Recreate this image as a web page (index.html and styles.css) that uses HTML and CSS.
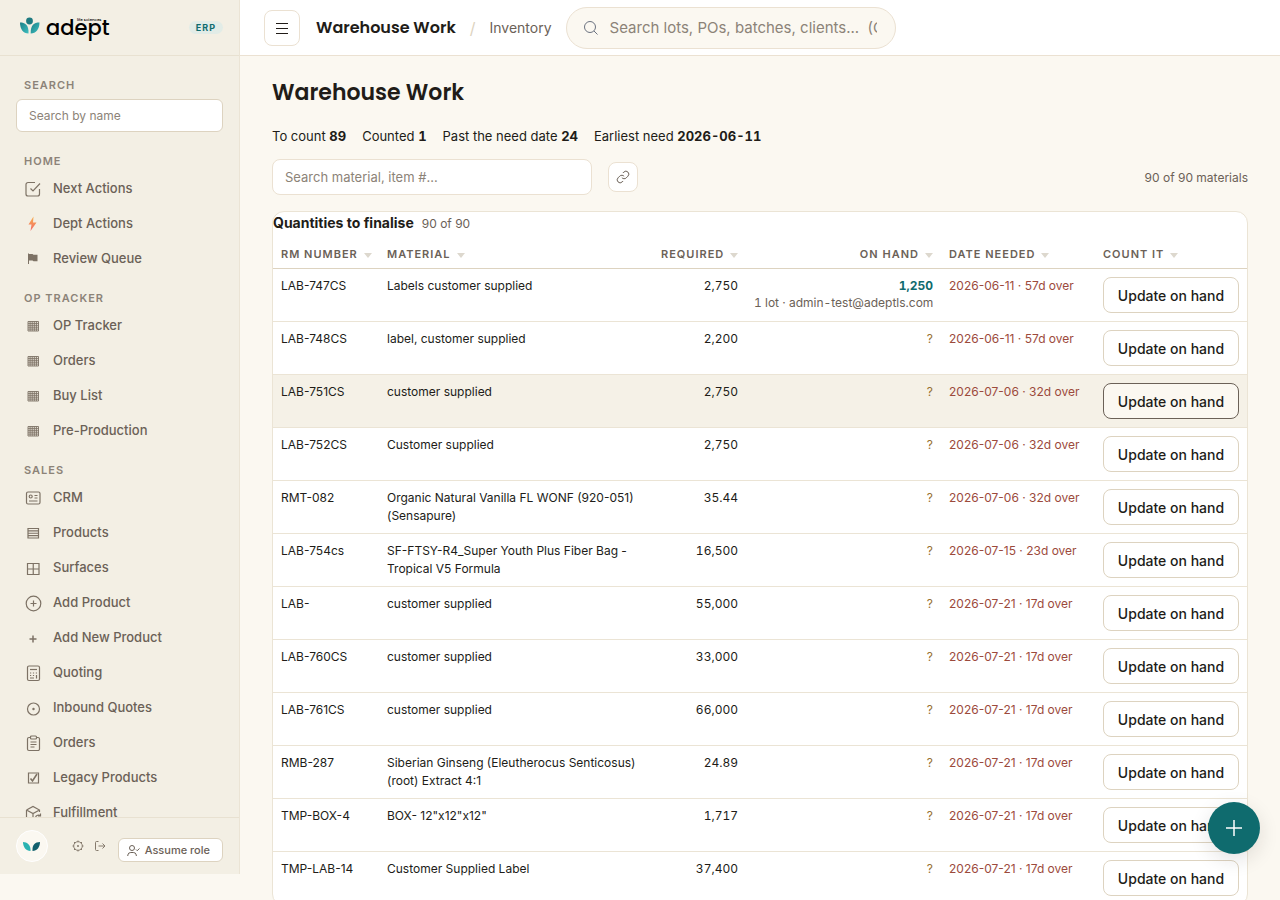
FILE: index.html
```
<!DOCTYPE html>
<html lang="en">
<head>
    <meta charset="UTF-8">
    <meta name="viewport" content="width=device-width, initial-scale=1.0">
    <title>Warehouse Work</title>
    <link rel="stylesheet" href="styles.css">
</head>
<body>
    <!-- shared icons -->
    <svg class="sprite" aria-hidden="true">
        <symbol id="i-grid" viewBox="0 0 18 18"><path d="M4 4.500h10.500v9.500H4zM6.100 4.500V14M8.200 4.500V14M10.300 4.500V14M12.400 4.500V14M4 6.400h10.500M4 8.300h10.500M4 10.200h10.500M4 12.100h10.500" stroke-width=".9"/></symbol>
    </svg>

    <div class="app">
        <aside class="sidebar">
            <div class="brand">
                <svg class="brand-mark" width="20" height="18" viewBox="0 0 20 18">
                    <defs>
                        <linearGradient id="leaf" x1="0" y1="0" x2="1" y2="1">
                            <stop offset="0" stop-color="#1b7f86"/>
                            <stop offset="1" stop-color="#3fbfc0"/>
                        </linearGradient>
                    </defs>
                    <circle cx="9.500" cy="4" r="3.400" fill="#1d7a80"/>
                    <path d="M0 5.500C5 5.500 9 8 8.500 16.500C3 16.500 0 12 0 5.500Z" fill="url(#leaf)"/>
                    <path d="M19.500 5.500C14 5.500 10.500 8 10.700 16.500C16 16.500 19.500 12 19.500 5.500Z" fill="url(#leaf)"/>
                </svg>
                <span class="brand-name">adept<small>life sciences</small></span>
                <span class="badge">ERP</span>
            </div>

            <nav class="nav">
                <div class="nav-section nav-search">
                    <label class="nav-label" for="nav-search">Search</label>
                    <input type="text" id="nav-search" placeholder="Search by name">
                </div>

                <div class="nav-section">
                    <div class="nav-label">Home</div>
                    <a class="nav-item" href="#"><svg viewBox="0 0 18 18"><path d="M11 2.500H4A2 2 0 0 0 2 4.500v9.500a2 2 0 0 0 2 2h9.500a2 2 0 0 0 2-2V9M6.500 8.500l2.500 2.500 7-7.500"/></svg>Next Actions</a>
                    <a class="nav-item" href="#"><svg viewBox="0 0 18 18"><defs><linearGradient id="bolt" x1="0" y1="0" x2="0" y2="1"><stop offset="0" stop-color="#f7b04c"/><stop offset="1" stop-color="#f2686a"/></linearGradient></defs><path d="M9.500 1.500L4.500 9.500h3L6.500 16L12.500 7.500H9z" fill="url(#bolt)" stroke="none"/></svg>Dept Actions</a>
                    <a class="nav-item" href="#"><svg viewBox="0 0 18 18"><path d="M4 3.500h1v.5h3.500l1 .7H13.500v6.500H9.500L8.500 10.500H5V14H4z" fill="currentColor" stroke="none"/></svg>Review Queue</a>
                </div>

                <div class="nav-section">
                    <div class="nav-label">OP Tracker</div>
                    <a class="nav-item" href="#"><svg><use href="#i-grid"/></svg>OP Tracker</a>
                    <a class="nav-item" href="#"><svg><use href="#i-grid"/></svg>Orders</a>
                    <a class="nav-item" href="#"><svg><use href="#i-grid"/></svg>Buy List</a>
                    <a class="nav-item" href="#"><svg><use href="#i-grid"/></svg>Pre-Production</a>
                </div>

                <div class="nav-section">
                    <div class="nav-label">Sales</div>
                    <a class="nav-item" href="#"><svg viewBox="0 0 18 18"><rect x="2.500" y="3" width="13.500" height="12" rx="1.500"/><circle cx="6.700" cy="7.500" r="1.500"/><path d="M10.500 6.500h3M10.500 9h3M5 12h8.500"/></svg>CRM</a>
                    <a class="nav-item" href="#"><svg viewBox="0 0 18 18"><path d="M4 4.500h10.500v9.500H4zM4 6.900h10.500M4 9.250h10.500M4 11.600h10.500"/></svg>Products</a>
                    <a class="nav-item" href="#"><svg viewBox="0 0 18 18"><path d="M3.500 4.500h11.500v11H3.500zM9.250 4.500v11M3.500 10h11.500"/></svg>Surfaces</a>
                    <a class="nav-item" href="#"><svg viewBox="0 0 18 18"><circle cx="9.500" cy="9.500" r="7.300"/><path d="M9.500 6.500v6M6.500 9.500h6"/></svg>Add Product</a>
                    <a class="nav-item" href="#"><svg viewBox="0 0 18 18"><path d="M9 6.500v7M5.500 10h7" stroke-width="1.500"/></svg>Add New Product</a>
                    <a class="nav-item" href="#"><svg viewBox="0 0 18 18"><rect x="3.500" y="2" width="12" height="14.500" rx="1.500"/><path d="M6 5.500h7"/><path d="M6 9h1.200M8.900 9h1.200M11.800 9H13M6 11.500h1.200M8.900 11.500h1.200M6 14h4M12.500 11V14.500"/></svg>Quoting</a>
                    <a class="nav-item" href="#"><svg viewBox="0 0 18 18"><circle cx="9.500" cy="10" r="6"/><circle cx="9.500" cy="10" r=".6" fill="currentColor"/></svg>Inbound Quotes</a>
                    <a class="nav-item" href="#"><svg viewBox="0 0 18 18"><path d="M6.500 3.500H5A1.500 1.500 0 0 0 3.500 5v10A1.500 1.500 0 0 0 5 16.500h9a1.500 1.500 0 0 0 1.500-1.500V5A1.500 1.500 0 0 0 14 3.500h-1.500"/><rect x="6.500" y="2" width="6" height="3" rx="1"/><path d="M6.500 8h6M6.500 10.500h6M6.500 13h4"/></svg>Orders</a>
                    <a class="nav-item" href="#"><svg viewBox="0 0 18 18"><path d="M4.500 4h10v10h-10z"/><path d="M6.500 9.500l2 2.500 4.500-7" stroke-width="1.600"/></svg>Legacy Products</a>
                    <a class="nav-item" href="#"><svg viewBox="0 0 18 18"><path d="M2.500 6L9 2.500 15.500 6v2M2.500 6v8L9 17V9.500M2.500 6L9 9.500 15.500 6M11.500 13.500a3 3 0 0 1 5-1.500M16.500 9.500V12H14"/></svg>Fulfillment</a>
                </div>
            </nav>

            <div class="sidebar-footer">
                <div class="avatar">
                    <svg width="18" height="11" viewBox="0 0 18 11">
                        <path d="M0 1C4 1 8 4 7.500 10C3 10 0 6 0 1Z" fill="#2ab3b1"/>
                        <path d="M17 1C12 1 9 4 9.500 10C14 10 17 6 17 1Z" fill="#12606d"/>
                    </svg>
                </div>
                <button class="icon-btn" type="button" aria-label="Settings"><svg width="12" height="12" viewBox="0 0 12 12"><circle cx="6" cy="6" r="4.300"/><circle cx="6" cy="6" r=".6" fill="currentColor"/><path d="M6 .5v1.500M6 10v1.500M.5 6H2M10 6h1.500M2 2l1 1M9 9l1 1M10 2L9 3M3 9l-1 1"/></svg></button>
                <button class="icon-btn" type="button" aria-label="Sign out"><svg width="12" height="12" viewBox="0 0 12 12"><path d="M4.500 1.500h-2a1 1 0 0 0-1 1v7a1 1 0 0 0 1 1h2M4.500 6h6M8.500 3.500L11 6 8.500 8.500"/></svg></button>
                <button class="role-btn" type="button"><svg width="13" height="13" viewBox="0 0 13 13"><circle cx="5" cy="4" r="2.500"/><path d="M.8 12V11a3 3 0 0 1 3-2.500h2.500a3 3 0 0 1 3 2.500v1M9 5.500l1.200 1.200L12.500 4.500"/></svg>Assume role</button>
            </div>
        </aside>

        <div class="main">
            <header class="topbar">
                <button class="menu-btn" type="button" aria-label="Toggle menu"><svg width="14" height="14" viewBox="0 0 14 14"><path d="M1 2.500h12M1 7.500h12M1 12.500h12"/></svg></button>
                <span class="topbar-title">Warehouse Work</span>
                <span class="slash">/</span>
                <a class="crumb" href="#">Inventory</a>
                <label class="global-search">
                    <svg width="16" height="16" viewBox="0 0 16 16"><circle cx="7" cy="7" r="5.500"/><path d="M11 11l3.500 3.500"/></svg>
                    <input type="text" aria-label="Search everything" placeholder="Search lots, POs, batches, clients...&nbsp; (Ctrl+K)">
                </label>
            </header>

            <main class="content">
                <h1>Warehouse Work</h1>

                <div class="stats">
                    <span>To count <b>89</b></span>
                    <span>Counted <b>1</b></span>
                    <span>Past the need date <b>24</b></span>
                    <span>Earliest need <b>2026-06-11</b></span>
                </div>

                <div class="toolbar">
                    <input type="text" aria-label="Search material" placeholder="Search material, item #...">
                    <button class="link-btn" type="button" aria-label="Copy link"><svg width="14" height="14" viewBox="0 0 24 24"><path d="M10 13a5 5 0 0 0 7.540.54l3-3a5 5 0 0 0-7.070-7.070l-1.720 1.710M14 11a5 5 0 0 0-7.540-.54l-3 3a5 5 0 0 0 7.070 7.070l1.710-1.710"/></svg></button>
                    <span class="count">90 of 90 materials</span>
                </div>

                <section class="card">
                    <div class="card-head"><h2>Quantities to finalise</h2><span>90 of 90</span></div>
                    <table>
                        <colgroup>
                            <col class="c-rm"><col><col class="c-req"><col class="c-hand"><col class="c-date"><col class="c-count">
                        </colgroup>
                        <thead>
                            <tr>
                                <th>RM Number<i></i></th>
                                <th>Material<i></i></th>
                                <th class="num">Required<i></i></th>
                                <th class="num">On hand<i></i></th>
                                <th>Date needed<i></i></th>
                                <th>Count it<i></i></th>
                            </tr>
                        </thead>
                        <tbody>
                            <tr><td>LAB-747CS</td><td>Labels customer supplied</td><td class="num">2,750</td><td class="num"><b class="counted">1,250</b><div class="lot">1 lot · admin-test@adeptls.com</div></td><td class="late">2026-06-11 · 57d over</td><td><button class="update" type="button">Update on hand</button></td></tr>
                            <tr><td>LAB-748CS</td><td>label, customer supplied</td><td class="num">2,200</td><td class="num unknown">?</td><td class="late">2026-06-11 · 57d over</td><td><button class="update" type="button">Update on hand</button></td></tr>
                            <tr class="active"><td>LAB-751CS</td><td>customer supplied</td><td class="num">2,750</td><td class="num unknown">?</td><td class="late">2026-07-06 · 32d over</td><td><button class="update" type="button">Update on hand</button></td></tr>
                            <tr><td>LAB-752CS</td><td>Customer supplied</td><td class="num">2,750</td><td class="num unknown">?</td><td class="late">2026-07-06 · 32d over</td><td><button class="update" type="button">Update on hand</button></td></tr>
                            <tr><td>RMT-082</td><td>Organic Natural Vanilla FL WONF (920-051) (Sensapure)</td><td class="num">35.44</td><td class="num unknown">?</td><td class="late">2026-07-06 · 32d over</td><td><button class="update" type="button">Update on hand</button></td></tr>
                            <tr><td>LAB-754cs</td><td>SF-FTSY-R4_Super Youth Plus Fiber Bag - Tropical V5 Formula</td><td class="num">16,500</td><td class="num unknown">?</td><td class="late">2026-07-15 · 23d over</td><td><button class="update" type="button">Update on hand</button></td></tr>
                            <tr><td>LAB-</td><td>customer supplied</td><td class="num">55,000</td><td class="num unknown">?</td><td class="late">2026-07-21 · 17d over</td><td><button class="update" type="button">Update on hand</button></td></tr>
                            <tr><td>LAB-760CS</td><td>customer supplied</td><td class="num">33,000</td><td class="num unknown">?</td><td class="late">2026-07-21 · 17d over</td><td><button class="update" type="button">Update on hand</button></td></tr>
                            <tr><td>LAB-761CS</td><td>customer supplied</td><td class="num">66,000</td><td class="num unknown">?</td><td class="late">2026-07-21 · 17d over</td><td><button class="update" type="button">Update on hand</button></td></tr>
                            <tr><td>RMB-287</td><td>Siberian Ginseng (Eleutherocus Senticosus) (root) Extract 4:1</td><td class="num">24.89</td><td class="num unknown">?</td><td class="late">2026-07-21 · 17d over</td><td><button class="update" type="button">Update on hand</button></td></tr>
                            <tr><td>TMP-BOX-4</td><td>BOX- 12"x12"x12"</td><td class="num">1,717</td><td class="num unknown">?</td><td class="late">2026-07-21 · 17d over</td><td><button class="update" type="button">Update on hand</button></td></tr>
                            <tr><td>TMP-LAB-14</td><td>Customer Supplied Label</td><td class="num">37,400</td><td class="num unknown">?</td><td class="late">2026-07-21 · 17d over</td><td><button class="update" type="button">Update on hand</button></td></tr>
                        </tbody>
                    </table>
                </section>
            </main>
        </div>

        <button class="fab" type="button" aria-label="Add"><svg width="18" height="18" viewBox="0 0 18 18"><path d="M9 1v16M1 9h16"/></svg></button>
    </div>
</body>
</html>
```
FILE: styles.css
```
* {
    box-sizing: border-box;
}
body {
    margin: 0;
    font-family: Inter, "Liberation Sans", sans-serif;
    font-size: 13px;
    color: #211c18;
    background: #fbf8f1;
}
button, input {
    font-family: inherit;
}
button {
    cursor: pointer;
}
a {
    text-decoration: none;
}
svg {
    fill: none;
    stroke: currentColor;
    flex-shrink: 0;
}
input::placeholder {
    color: #8c8378;
    opacity: 1;
}
.sprite {
    display: none;
}
.app {
    display: flex;
    height: 100vh;
    overflow: hidden;
}

/* sidebar */
.sidebar {
    display: flex;
    flex-direction: column;
    width: 240px;
    height: calc(100vh - 26px);
    flex-shrink: 0;
    background: #f3efe4;
    border-right: 1px solid #ebe4d5;
}
.brand {
    display: flex;
    align-items: center;
    height: 56px;
    flex-shrink: 0;
    padding: 0 16px 0 20px;
    border-bottom: 1px solid #e8e1d1;
}
.brand-mark {
    stroke: none;
    margin-bottom: 4px;
}
.brand-name {
    position: relative;
    margin-left: 6px;
    font-family: Poppins, Inter, sans-serif;
    font-size: 21px;
    font-weight: 500;
    line-height: 28px;
    color: #000;
}
.brand-name small {
    position: absolute;
    top: 4px;
    right: 8px;
    font-size: 4px;
    line-height: 4px;
    white-space: nowrap;
}
.badge {
    margin-left: auto;
    padding: 0 7px;
    border-radius: 7px;
    background: #e2ece7;
    color: #0f6b6e;
    font-size: 9px;
    font-weight: 700;
    line-height: 13px;
    letter-spacing: 1px;
}
.nav {
    flex: 1;
    min-height: 0;
    overflow: hidden;
    padding-top: 19px;
}
.nav-section {
    margin-bottom: 12px;
}
.nav-label {
    display: block;
    padding-left: 24px;
    font-size: 11px;
    font-weight: 600;
    line-height: 20px;
    letter-spacing: 1px;
    text-transform: uppercase;
    color: #8c8378;
}
.nav-search {
    padding: 0 16px;
    margin-bottom: 19px;
}
.nav-search .nav-label {
    padding-left: 8px;
    margin-bottom: 4px;
}
.nav-search input {
    display: block;
    width: 100%;
    height: 33px;
    padding: 0 12px;
    border: 1px solid #ddd3c0;
    border-radius: 6px;
    background: #fff;
    font-size: 12px;
}
.nav-item {
    display: flex;
    align-items: center;
    gap: 11px;
    height: 35px;
    padding: 0 0 2px 24px;
    color: #6b6157;
    font-size: 13px;
    font-weight: 500;
}
.nav-item svg {
    width: 18px;
    height: 18px;
    margin-top: 2px;
    color: #7d7265;
    stroke-width: 1.2;
}
.sidebar-footer {
    display: flex;
    align-items: center;
    gap: 10px;
    height: 57px;
    flex-shrink: 0;
    padding: 0 16px;
    border-top: 1px solid #e8e1d1;
}
.avatar {
    display: flex;
    align-items: center;
    justify-content: center;
    width: 32px;
    height: 32px;
    margin-right: auto;
    border-radius: 50%;
    border: 1px solid #fff;
    background: #fbf8f1;
}
.avatar svg {
    stroke: none;
}
.icon-btn {
    display: flex;
    padding: 0;
    border: 0;
    background: none;
    color: #857a6d;
}
.role-btn {
    display: flex;
    align-items: center;
    gap: 5px;
    height: 24px;
    margin: 8px 0 0 2px;
    padding: 0 12px 0 8px;
    border: 1px solid #ddd3c0;
    border-radius: 6px;
    background: #fff;
    color: #6b6157;
    font-size: 11px;
    font-weight: 500;
}

/* top bar */
.main {
    display: flex;
    flex-direction: column;
    flex: 1;
    min-width: 0;
}
.topbar {
    display: flex;
    align-items: center;
    gap: 14px;
    height: 56px;
    flex-shrink: 0;
    padding: 0 24px;
    background: #fff;
    border-bottom: 1px solid #ebe1d2;
}
.menu-btn {
    display: flex;
    align-items: center;
    justify-content: center;
    width: 36px;
    height: 36px;
    margin-right: 2px;
    padding: 0;
    border: 1px solid #ebe1d2;
    border-radius: 8px;
    background: #fff;
    color: #211c18;
}
.topbar-title {
    font-family: Poppins, Inter, sans-serif;
    font-size: 16px;
    font-weight: 600;
}
.slash {
    color: #ddd3c0;
    font-size: 16px;
}
.crumb {
    color: #6b6157;
    font-size: 14px;
}
.global-search {
    display: flex;
    align-items: center;
    gap: 11px;
    width: 330px;
    height: 42px;
    padding: 0 18px 0 16px;
    border: 1px solid #ebe1d2;
    border-radius: 21px;
    background: #fbf8f1;
    color: #6b7280;
}
.global-search input {
    flex: 1;
    min-width: 0;
    padding: 0;
    border: 0;
    outline: 0;
    background: none;
    font-size: 15px;
}

/* page */
.content {
    flex: 1;
    min-height: 0;
    overflow-y: auto;
    scrollbar-width: none;
    padding: 21px 32px;
}
h1 {
    margin: 0 0 17px;
    font-family: Poppins, Inter, sans-serif;
    font-size: 22px;
    font-weight: 600;
    line-height: 32px;
}
.stats {
    display: flex;
    gap: 16px;
    margin-bottom: 13px;
    line-height: 20px;
}
.stats b, .num {
    font-variant-numeric: tabular-nums;
}
.toolbar {
    display: flex;
    align-items: center;
    gap: 16px;
    margin-bottom: 16px;
}
.toolbar input {
    width: 320px;
    height: 36px;
    padding: 0 12px;
    border: 1px solid #ebe1d2;
    border-radius: 8px;
    background: #fff;
    font-size: 13px;
}
.link-btn {
    display: flex;
    align-items: center;
    justify-content: center;
    width: 30px;
    height: 30px;
    padding: 0;
    border: 1px solid #ebe1d2;
    border-radius: 8px;
    background: #fff;
    color: #6b6157;
}
.link-btn svg {
    stroke-width: 1.7;
}
.count {
    margin-left: auto;
    color: #6b6157;
    font-size: 12px;
}
.card {
    overflow: hidden;
    border: 1px solid #ebe4d5;
    border-radius: 12px;
    background: #fff;
}
.card-head {
    display: flex;
    align-items: baseline;
    gap: 8px;
    line-height: 22px;
}
.card-head h2 {
    margin: 0;
    font-size: 14px;
    font-weight: 700;
}
.card-head span {
    color: #6b6157;
    font-size: 12px;
}
table {
    width: 100%;
    table-layout: fixed;
    border-collapse: separate;
    border-spacing: 0;
}
.c-rm {
    width: 106px;
}
.c-req {
    width: 93px;
}
.c-hand {
    width: 195px;
}
.c-date {
    width: 154px;
}
.c-count {
    width: 152px;
}
th {
    height: 34px;
    padding: 10px 8px 5px;
    border-bottom: 1px solid #ddd3c0;
    color: #6b6157;
    font-size: 11px;
    font-weight: 600;
    line-height: 14px;
    letter-spacing: 1px;
    text-align: left;
    text-transform: uppercase;
    white-space: nowrap;
}
th i {
    display: inline-block;
    margin-left: 6px;
    border: 4px solid transparent;
    border-top: 5px solid #ddd8ce;
    border-bottom: 0;
}
td {
    height: 53px;
    padding: 8px 8px 7px;
    border-bottom: 1px solid #ebe4d5;
    font-size: 12px;
    line-height: 18px;
    vertical-align: top;
}
th.num, td.num {
    text-align: right;
}
.counted {
    color: #0f6b6e;
}
.lot {
    color: #6b6157;
    line-height: 16px;
    white-space: nowrap;
}
.unknown {
    color: #97702f;
}
.late {
    color: #9c4a3c;
    white-space: nowrap;
}
.update {
    display: block;
    width: 100%;
    height: 36px;
    padding: 0;
    border: 1px solid #ddd3c0;
    border-radius: 8px;
    background: #fff;
    color: #211c18;
    font-size: 14px;
    font-weight: 500;
}
.active td {
    background: #f5f1e7;
}
.active .update {
    border-color: #6b6157;
    background: #fbf8f1;
}

.fab {
    position: fixed;
    right: 20px;
    bottom: 46px;
    display: flex;
    align-items: center;
    justify-content: center;
    width: 52px;
    height: 52px;
    padding: 0;
    border: 0;
    border-radius: 50%;
    background: #0f6b6e;
    box-shadow: 0 6px 20px rgba(33, 28, 24, 0.12);
    color: #fff;
}
.fab svg {
    stroke-width: 1.5;
}
```
